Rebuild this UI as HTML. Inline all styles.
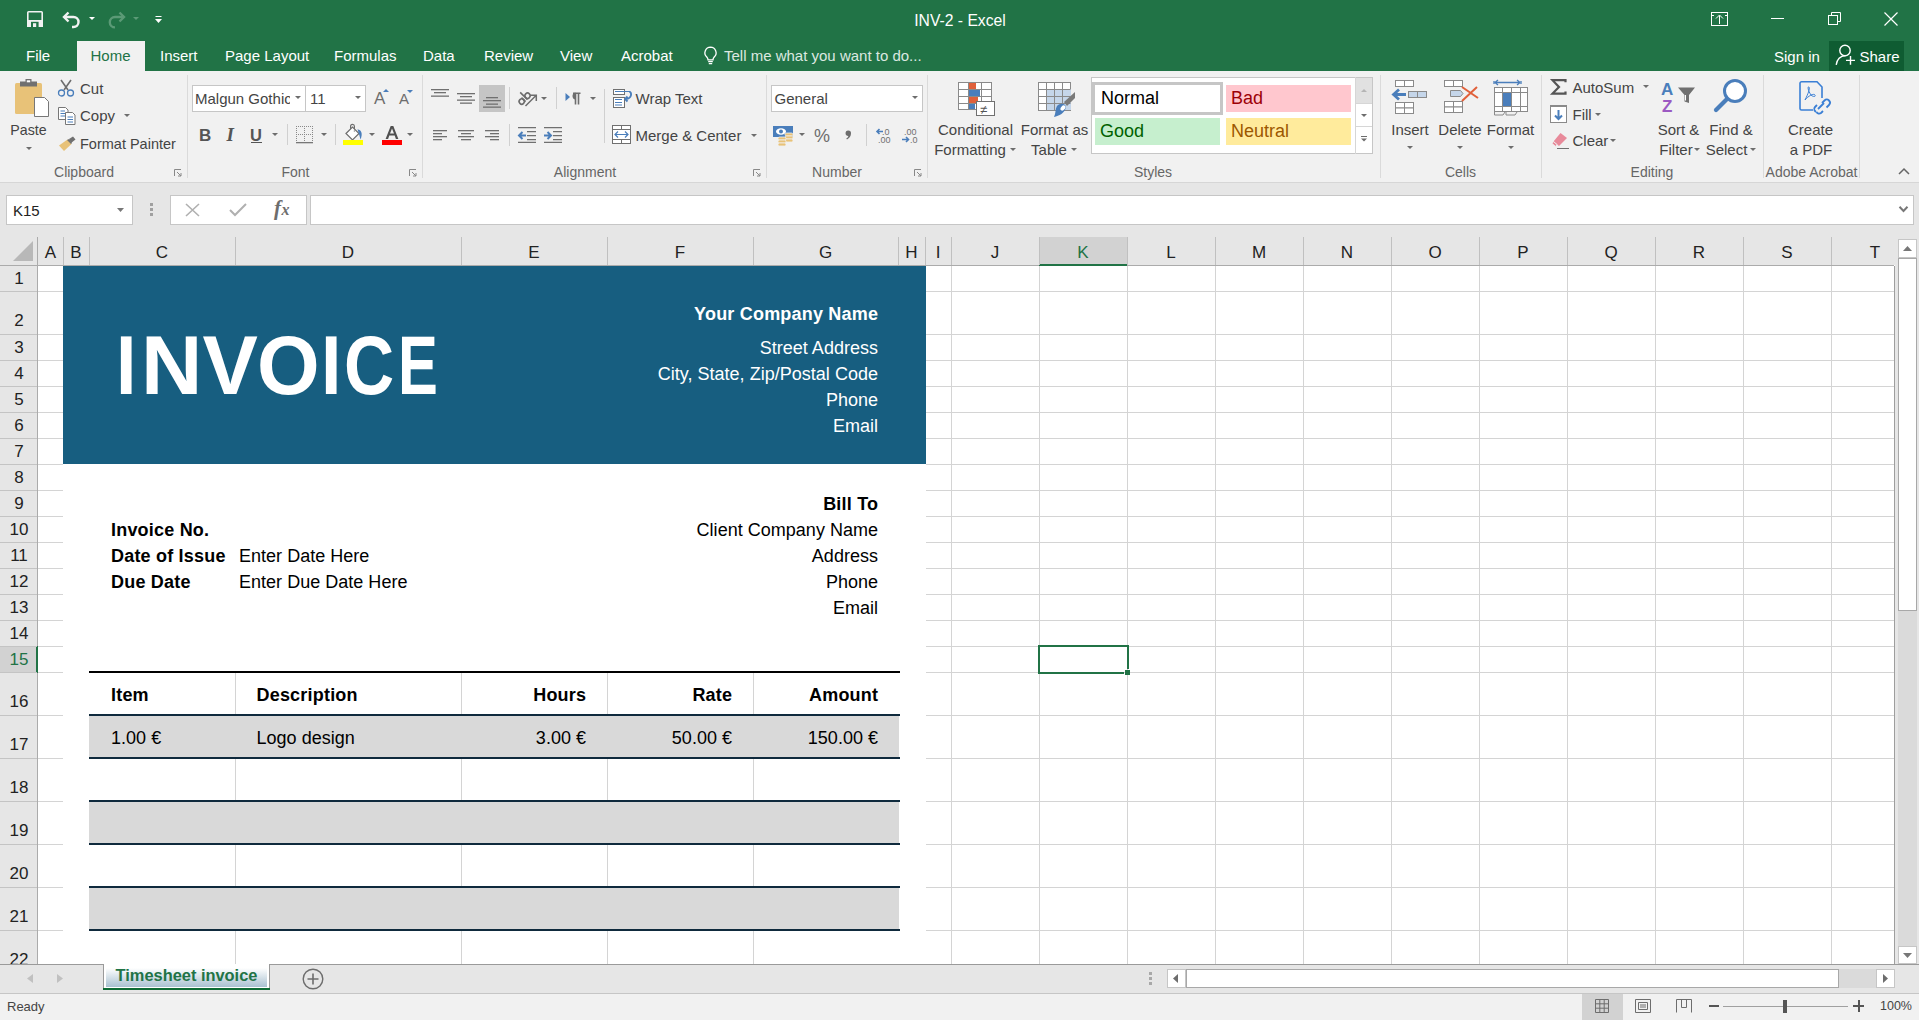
<!DOCTYPE html>
<html><head><meta charset="utf-8"><title>INV-2 - Excel</title>
<style>
html,body{margin:0;padding:0;width:1919px;height:1020px;overflow:hidden;background:#fff;}
body{position:relative;font-family:'Liberation Sans', sans-serif;}
.r{position:absolute;}
.t{position:absolute;white-space:pre;line-height:1;font-family:'Liberation Sans', sans-serif;}
svg.r{overflow:visible;}
</style></head><body>
<div class="r" style="left:0px;top:0px;width:1919px;height:71px;background:#217346;"></div>
<svg class="r" style="left:27px;top:11px;" width="16" height="16" viewBox="0 0 16 16"><rect x="0.8" y="0.8" width="14.4" height="14.4" rx="0.8" fill="none" stroke="#f2f2f2" stroke-width="1.6"/><rect x="0" y="9" width="16" height="7" fill="#f2f2f2"/><rect x="4" y="10.8" width="7.6" height="5.2" fill="#217346"/><rect x="6" y="12.2" width="3.2" height="3.8" fill="#f2f2f2"/></svg>
<svg class="r" style="left:62px;top:11px;" width="20" height="18" viewBox="0 0 20 18"><path d="M6.5 1.5L2 6L6.5 10.5" fill="none" stroke="#f2f2f2" stroke-width="2.4"/><path d="M2.5 6H11.5A5 5 0 0 1 11.5 16H10" fill="none" stroke="#f2f2f2" stroke-width="2.4"/></svg>
<svg class="r" style="left:89px;top:17px;" width="6" height="3" viewBox="0 0 6 3"><path d="M0 0H6L3.0 3Z" fill="#fff"/></svg>
<svg class="r" style="left:106px;top:11px;" width="20" height="18" viewBox="0 0 20 18"><path d="M13.5 1.5L18 6L13.5 10.5" fill="none" stroke="#5b9a76" stroke-width="2.4"/><path d="M17.5 6H9A5.2 5.2 0 0 0 9 16.4" fill="none" stroke="#5b9a76" stroke-width="2.4"/></svg>
<svg class="r" style="left:133px;top:17px;" width="6" height="3" viewBox="0 0 6 3"><path d="M0 0H6L3.0 3Z" fill="#5b9a76"/></svg>
<svg class="r" style="left:155px;top:16px;" width="7" height="8" viewBox="0 0 7 8"><path d="M0.5 0.5H6.5" stroke="#fff" stroke-width="1"/><path d="M0 3H7L3.5 7Z" fill="#fff"/></svg>
<div class="t" style="top:12.66px;font-size:15.7px;color:#fff;left:660px;width:600px;text-align:center;">INV-2 - Excel</div>
<svg class="r" style="left:1711px;top:12px;" width="17" height="14" viewBox="0 0 17 14"><rect x="0.5" y="0.5" width="16" height="13" fill="none" stroke="#fff"/><path d="M8.5 3.5V12" stroke="#fff"/><path d="M5 6.5L8.5 3L12 6.5" fill="none" stroke="#fff"/><path d="M0.5 3.5H3M14 3.5H16.5" stroke="#fff"/></svg>
<div class="r" style="left:1771px;top:18px;width:13px;height:1px;background:#fff;"></div>
<svg class="r" style="left:1828px;top:12px;" width="13" height="13" viewBox="0 0 13 13"><rect x="0.5" y="3.5" width="9" height="9" fill="none" stroke="#fff"/><path d="M3.5 3.5V0.5H12.5V9.5H9.5" fill="none" stroke="#fff"/></svg>
<svg class="r" style="left:1884px;top:12px;" width="14" height="14" viewBox="0 0 14 14"><path d="M0.5 0.5L13.5 13.5M13.5 0.5L0.5 13.5" stroke="#fff" stroke-width="1.2"/></svg>
<div class="r" style="left:77px;top:41px;width:68px;height:30px;background:#f1f1f1;"></div>
<div class="t" style="top:48.25px;font-size:15px;color:#fff;left:26px;">File</div>
<div class="t" style="top:48.25px;font-size:15px;color:#fff;left:160px;">Insert</div>
<div class="t" style="top:48.25px;font-size:15px;color:#fff;left:225px;">Page Layout</div>
<div class="t" style="top:48.25px;font-size:15px;color:#fff;left:334px;">Formulas</div>
<div class="t" style="top:48.25px;font-size:15px;color:#fff;left:423px;">Data</div>
<div class="t" style="top:48.25px;font-size:15px;color:#fff;left:484px;">Review</div>
<div class="t" style="top:48.25px;font-size:15px;color:#fff;left:560px;">View</div>
<div class="t" style="top:48.25px;font-size:15px;color:#fff;left:621px;">Acrobat</div>
<div class="t" style="top:48.25px;font-size:15px;color:#217346;left:90.5px;">Home</div>
<svg class="r" style="left:703px;top:46px;" width="15" height="19" viewBox="0 0 15 19"><path d="M7.5 1.2A5.6 5.6 0 0 0 3.6 10.8C4.6 11.8 5 12.6 5 13.8H10C10 12.6 10.4 11.8 11.4 10.8A5.6 5.6 0 0 0 7.5 1.2Z" fill="none" stroke="#fff" stroke-width="1.3"/><path d="M5.2 15.6H9.8M5.8 17.6H9.2" stroke="#fff" stroke-width="1.3"/></svg>
<div class="t" style="top:48.25px;font-size:15px;color:#dce8e0;left:724px;">Tell me what you want to do...</div>
<div class="t" style="top:49.25px;font-size:15px;color:#fff;left:1774px;">Sign in</div>
<div class="r" style="left:1829px;top:41px;width:75px;height:30px;background:#0f5c32;"></div>
<svg class="r" style="left:1835px;top:44px;" width="22" height="22" viewBox="0 0 22 22"><circle cx="10" cy="6.5" r="5.2" fill="none" stroke="#fff" stroke-width="1.4"/><path d="M1.2 20.8C2 15 5.5 12 10.5 11.6" fill="none" stroke="#fff" stroke-width="1.4"/><path d="M11 16.4H20M15.5 12V20.8" stroke="#fff" stroke-width="1.4"/></svg>
<div class="t" style="top:49.25px;font-size:15px;color:#fff;left:1859.5px;">Share</div>
<div class="r" style="left:0px;top:71px;width:1919px;height:111px;background:#f1f1f1;"></div>
<div class="r" style="left:0px;top:182px;width:1919px;height:1px;background:#d6d6d6;"></div>
<div class="r" style="left:187px;top:75px;width:1px;height:103px;background:#dadada;"></div>
<div class="r" style="left:422px;top:75px;width:1px;height:103px;background:#dadada;"></div>
<div class="r" style="left:766px;top:75px;width:1px;height:103px;background:#dadada;"></div>
<div class="r" style="left:927px;top:75px;width:1px;height:103px;background:#dadada;"></div>
<div class="r" style="left:1380px;top:75px;width:1px;height:103px;background:#dadada;"></div>
<div class="r" style="left:1541px;top:75px;width:1px;height:103px;background:#dadada;"></div>
<div class="r" style="left:1763px;top:75px;width:1px;height:103px;background:#dadada;"></div>
<div class="r" style="left:1859px;top:75px;width:1px;height:103px;background:#dadada;"></div>
<div class="t" style="top:165.10px;font-size:14px;color:#666;left:-216px;width:600px;text-align:center;">Clipboard</div>
<div class="t" style="top:165.10px;font-size:14px;color:#666;left:-4.5px;width:600px;text-align:center;">Font</div>
<div class="t" style="top:165.10px;font-size:14px;color:#666;left:285px;width:600px;text-align:center;">Alignment</div>
<div class="t" style="top:165.10px;font-size:14px;color:#666;left:537px;width:600px;text-align:center;">Number</div>
<div class="t" style="top:165.10px;font-size:14px;color:#666;left:853px;width:600px;text-align:center;">Styles</div>
<div class="t" style="top:165.10px;font-size:14px;color:#666;left:1160.5px;width:600px;text-align:center;">Cells</div>
<div class="t" style="top:165.10px;font-size:14px;color:#666;left:1352px;width:600px;text-align:center;">Editing</div>
<div class="t" style="top:165.10px;font-size:14px;color:#666;left:1511.5px;width:600px;text-align:center;">Adobe Acrobat</div>
<svg class="r" style="left:174px;top:169px;" width="8" height="8" viewBox="0 0 8 8"><path d="M0.5 7V0.5H7" fill="none" stroke="#888"/><path d="M3 3L7 7M7 4V7H4" fill="none" stroke="#888"/></svg>
<svg class="r" style="left:409px;top:169px;" width="8" height="8" viewBox="0 0 8 8"><path d="M0.5 7V0.5H7" fill="none" stroke="#888"/><path d="M3 3L7 7M7 4V7H4" fill="none" stroke="#888"/></svg>
<svg class="r" style="left:753px;top:169px;" width="8" height="8" viewBox="0 0 8 8"><path d="M0.5 7V0.5H7" fill="none" stroke="#888"/><path d="M3 3L7 7M7 4V7H4" fill="none" stroke="#888"/></svg>
<svg class="r" style="left:914px;top:169px;" width="8" height="8" viewBox="0 0 8 8"><path d="M0.5 7V0.5H7" fill="none" stroke="#888"/><path d="M3 3L7 7M7 4V7H4" fill="none" stroke="#888"/></svg>
<svg class="r" style="left:1898px;top:167px;" width="12" height="8" viewBox="0 0 12 8"><path d="M1 7L6 2L11 7" fill="none" stroke="#666" stroke-width="1.5"/></svg>
<svg class="r" style="left:14px;top:79px;" width="36" height="40" viewBox="0 0 36 40"><rect x="1" y="4" width="27" height="31" rx="1.5" fill="#e8c278"/><rect x="6" y="2.5" width="17" height="5" fill="#707070"/><rect x="11.5" y="0" width="6" height="4.5" fill="#707070"/><rect x="12.8" y="1.3" width="3.4" height="2" fill="#fff"/><path d="M20.5 18.5H30.5L34.5 22.5V37.5H20.5Z" fill="#fff" stroke="#777"/></svg>
<div class="t" style="top:122.93px;font-size:14.2px;color:#444444;left:-271.5px;width:600px;text-align:center;">Paste</div>
<svg class="r" style="left:25.5px;top:147px;" width="6" height="3" viewBox="0 0 6 3"><path d="M0 0H6L3.0 3Z" fill="#6d6d6d"/></svg>
<svg class="r" style="left:57px;top:79px;" width="18" height="18" viewBox="0 0 18 18"><path d="M4 1L11 11M14 1L7 11" stroke="#6d6d6d" stroke-width="1.6"/><circle cx="4.5" cy="14" r="3" fill="none" stroke="#4a7ebb" stroke-width="1.3"/><circle cx="13.5" cy="14" r="3" fill="none" stroke="#4a7ebb" stroke-width="1.3"/></svg>
<div class="t" style="top:81.25px;font-size:15px;color:#444444;left:80px;">Cut</div>
<svg class="r" style="left:57px;top:107px;" width="19" height="18" viewBox="0 0 19 18"><path d="M1.5 0.5H8.5L11 3V12.5H1.5Z" fill="#fff" stroke="#777"/><path d="M3.5 4H8M3.5 6.5H8M3.5 9H8" stroke="#4a7ebb"/><path d="M8.5 5.5H15.5L18 8V17.5H8.5Z" fill="#fff" stroke="#777"/><path d="M10.5 10H16M10.5 12.5H16M10.5 15H16" stroke="#4a7ebb"/></svg>
<div class="t" style="top:108.25px;font-size:15px;color:#444444;left:80px;">Copy</div>
<svg class="r" style="left:124px;top:114px;" width="6" height="3" viewBox="0 0 6 3"><path d="M0 0H6L3.0 3Z" fill="#6d6d6d"/></svg>
<svg class="r" style="left:58px;top:136px;" width="18" height="16" viewBox="0 0 18 16"><path d="M11 3L15 0.5L17.5 3.5L13 7Z" fill="#707070"/><path d="M1 9.5L9.5 3.5L13.5 8L6 15Z" fill="#e8c278"/><path d="M9 4L11 3L14 7L13 8Z" fill="#707070"/></svg>
<div class="t" style="top:137.18px;font-size:14.5px;color:#444444;left:80px;">Format Painter</div>
<div class="r" style="left:192px;top:85px;width:114px;height:27px;background:#fff;border:1px solid #c6c6c6;box-sizing:border-box;"></div>
<div class="r" style="left:305px;top:85px;width:61px;height:27px;background:#fff;border:1px solid #c6c6c6;box-sizing:border-box;"></div>
<div class="t" style="top:91.25px;font-size:15px;color:#444444;left:195px;width:95px;overflow:hidden;padding-bottom:5px;">Malgun Gothic</div>
<svg class="r" style="left:295px;top:96px;" width="6" height="3" viewBox="0 0 6 3"><path d="M0 0H6L3.0 3Z" fill="#6d6d6d"/></svg>
<div class="t" style="top:91.25px;font-size:15px;color:#444444;left:310px;">11</div>
<svg class="r" style="left:355px;top:96px;" width="6" height="3" viewBox="0 0 6 3"><path d="M0 0H6L3.0 3Z" fill="#6d6d6d"/></svg>
<div class="t" style="top:89.55px;font-size:17px;color:#6d6d6d;left:374px;">A</div>
<svg class="r" style="left:383px;top:89px;" width="6" height="3" viewBox="0 0 6 3"><path d="M0 3H6L3 0Z" fill="#4a7ebb"/></svg>
<div class="t" style="top:91.25px;font-size:15px;color:#6d6d6d;left:399px;">A</div>
<svg class="r" style="left:407px;top:90px;" width="6" height="3" viewBox="0 0 6 3"><path d="M0 0H6L3 3Z" fill="#4a7ebb"/></svg>
<div class="t" style="top:126.55px;font-size:17px;color:#555;font-weight:700;left:199px;">B</div>
<div class="t" style="top:124.85px;font-size:19px;color:#555;font-weight:700;left:226.5px;font-style:italic;font-family:&quot;Liberation Serif&quot;,serif;">I</div>
<div class="t" style="top:126.97px;font-size:16.5px;color:#555;font-weight:700;left:250px;">U</div>
<div class="r" style="left:251px;top:142px;width:11px;height:1.2px;background:#555;"></div>
<svg class="r" style="left:272px;top:133px;" width="6" height="3" viewBox="0 0 6 3"><path d="M0 0H6L3.0 3Z" fill="#6d6d6d"/></svg>
<div class="r" style="left:287px;top:124px;width:1px;height:21px;background:#d0d0d0;"></div>
<svg class="r" style="left:296px;top:126px;" width="19" height="19" viewBox="0 0 19 19"><g fill="#8a8a8a"><rect x="0" y="0" width="1" height="1"/><rect x="0" y="8" width="1" height="1"/><rect x="2" y="0" width="1" height="1"/><rect x="2" y="8" width="1" height="1"/><rect x="4" y="0" width="1" height="1"/><rect x="4" y="8" width="1" height="1"/><rect x="6" y="0" width="1" height="1"/><rect x="6" y="8" width="1" height="1"/><rect x="8" y="0" width="1" height="1"/><rect x="8" y="8" width="1" height="1"/><rect x="10" y="0" width="1" height="1"/><rect x="10" y="8" width="1" height="1"/><rect x="12" y="0" width="1" height="1"/><rect x="12" y="8" width="1" height="1"/><rect x="14" y="0" width="1" height="1"/><rect x="14" y="8" width="1" height="1"/><rect x="16" y="0" width="1" height="1"/><rect x="16" y="8" width="1" height="1"/><rect x="0" y="0" width="1" height="1"/><rect x="0" y="2" width="1" height="1"/><rect x="0" y="4" width="1" height="1"/><rect x="0" y="6" width="1" height="1"/><rect x="0" y="8" width="1" height="1"/><rect x="0" y="10" width="1" height="1"/><rect x="0" y="12" width="1" height="1"/><rect x="0" y="14" width="1" height="1"/><rect x="8" y="0" width="1" height="1"/><rect x="8" y="2" width="1" height="1"/><rect x="8" y="4" width="1" height="1"/><rect x="8" y="6" width="1" height="1"/><rect x="8" y="8" width="1" height="1"/><rect x="8" y="10" width="1" height="1"/><rect x="8" y="12" width="1" height="1"/><rect x="8" y="14" width="1" height="1"/><rect x="16" y="0" width="1" height="1"/><rect x="16" y="2" width="1" height="1"/><rect x="16" y="4" width="1" height="1"/><rect x="16" y="6" width="1" height="1"/><rect x="16" y="8" width="1" height="1"/><rect x="16" y="10" width="1" height="1"/><rect x="16" y="12" width="1" height="1"/><rect x="16" y="14" width="1" height="1"/></g><rect x="0" y="16" width="17" height="1.3" fill="#777"/></svg>
<svg class="r" style="left:321px;top:133px;" width="6" height="3" viewBox="0 0 6 3"><path d="M0 0H6L3.0 3Z" fill="#6d6d6d"/></svg>
<div class="r" style="left:335px;top:124px;width:1px;height:21px;background:#d0d0d0;"></div>
<svg class="r" style="left:342px;top:124px;" width="22" height="17" viewBox="0 0 22 17"><path d="M8.6 6V2.2A1.9 1.9 0 0 1 12.4 2.2V7.5" fill="none" stroke="#6d6d6d" stroke-width="1.2"/><path d="M4 9.5L10.5 3L17 9.5L10.5 16Z" fill="#fff" stroke="#6d6d6d" stroke-width="1.2"/><path d="M12.4 6.5V7.5" stroke="#6d6d6d" stroke-width="1.2"/><path d="M15.5 5.2C19.5 6 21 9.5 18.5 15.5L17 10Z" fill="#4a7ebb"/></svg>
<div class="r" style="left:343px;top:140px;width:20px;height:5px;background:#ffff00;"></div>
<svg class="r" style="left:369px;top:133px;" width="6" height="3" viewBox="0 0 6 3"><path d="M0 0H6L3.0 3Z" fill="#6d6d6d"/></svg>
<svg class="r" style="left:385px;top:125px;" width="14" height="15" viewBox="0 0 14 15"><path fill-rule="evenodd" d="M0.6 14L5.7 1H8.3L13.4 14H10.9L9.7 10.6H4.3L3.1 14ZM5 8.6H9L7 3.4Z" fill="#505050"/></svg>
<div class="r" style="left:382px;top:140px;width:20px;height:5px;background:#ff0000;"></div>
<svg class="r" style="left:407px;top:133px;" width="6" height="3" viewBox="0 0 6 3"><path d="M0 0H6L3.0 3Z" fill="#6d6d6d"/></svg>
<div class="r" style="left:479px;top:85px;width:26px;height:27px;background:#c5c5c5;"></div>
<svg class="r" style="left:431px;top:0px;" width="20" height="160" viewBox="0 0 20 160"><rect x="0" y="89" width="18" height="1.3" fill="#707070"/><rect x="3" y="92" width="12" height="1.3" fill="#707070"/><rect x="0" y="95.5" width="18" height="1.3" fill="#707070"/></svg>
<svg class="r" style="left:457px;top:0px;" width="20" height="160" viewBox="0 0 20 160"><rect x="0" y="93" width="18" height="1.3" fill="#707070"/><rect x="3" y="96" width="12" height="1.3" fill="#707070"/><rect x="0" y="99.5" width="18" height="1.3" fill="#707070"/><rect x="3" y="102.5" width="12" height="1.3" fill="#707070"/></svg>
<svg class="r" style="left:483px;top:0px;" width="20" height="160" viewBox="0 0 20 160"><rect x="3" y="97" width="12" height="1.3" fill="#707070"/><rect x="0" y="100" width="18" height="1.3" fill="#707070"/><rect x="3" y="103.5" width="12" height="1.3" fill="#707070"/><rect x="0" y="106.5" width="18" height="1.3" fill="#707070"/></svg>
<div class="r" style="left:509px;top:87px;width:1px;height:22px;background:#d0d0d0;"></div>
<svg class="r" style="left:516px;top:88px;" width="22" height="20" viewBox="0 0 22 20"><g transform="rotate(-45 8 9)" fill="none" stroke="#6d6d6d" stroke-width="1.6"><circle cx="3.2" cy="10.6" r="2.6"/><path d="M5.8 7.6V13.4"/><path d="M8.6 3V13.4"/><circle cx="11.4" cy="10.6" r="2.6"/></g><path d="M9.5 18L20 7.5M14.5 7.2H20.3V13" fill="none" stroke="#6d6d6d" stroke-width="1.5"/></svg>
<svg class="r" style="left:541px;top:97px;" width="6" height="3" viewBox="0 0 6 3"><path d="M0 0H6L3.0 3Z" fill="#6d6d6d"/></svg>
<div class="r" style="left:556px;top:87px;width:1px;height:22px;background:#d0d0d0;"></div>
<svg class="r" style="left:565px;top:92px;" width="17" height="13" viewBox="0 0 17 13"><path d="M0.5 1L5 5L0.5 9Z" fill="#4a7ebb"/><path d="M10.5 1.5V12.5M13.5 1.5V12.5M8 1.3H15.5" stroke="#6d6d6d" stroke-width="1.6"/><path d="M10.5 0.5A3.6 3.6 0 0 0 10.5 7.6Z" fill="#6d6d6d"/></svg>
<svg class="r" style="left:590px;top:97px;" width="6" height="3" viewBox="0 0 6 3"><path d="M0 0H6L3.0 3Z" fill="#6d6d6d"/></svg>
<div class="r" style="left:604px;top:89px;width:1px;height:54px;background:#d0d0d0;"></div>
<svg class="r" style="left:433px;top:0px;" width="20" height="160" viewBox="0 0 20 160"><rect x="0" y="130" width="14" height="1.3" fill="#707070"/><rect x="0" y="133" width="9" height="1.3" fill="#707070"/><rect x="0" y="136" width="14" height="1.3" fill="#707070"/><rect x="0" y="139" width="9" height="1.3" fill="#707070"/></svg>
<svg class="r" style="left:458px;top:0px;" width="20" height="160" viewBox="0 0 20 160"><rect x="0" y="130" width="16" height="1.3" fill="#707070"/><rect x="3" y="133" width="10" height="1.3" fill="#707070"/><rect x="0" y="136" width="16" height="1.3" fill="#707070"/><rect x="3" y="139" width="10" height="1.3" fill="#707070"/></svg>
<svg class="r" style="left:485px;top:0px;" width="20" height="160" viewBox="0 0 20 160"><rect x="0" y="130" width="14" height="1.3" fill="#707070"/><rect x="5" y="133" width="9" height="1.3" fill="#707070"/><rect x="0" y="136" width="14" height="1.3" fill="#707070"/><rect x="5" y="139" width="9" height="1.3" fill="#707070"/></svg>
<div class="r" style="left:509px;top:124px;width:1px;height:22px;background:#d0d0d0;"></div>
<svg class="r" style="left:518px;top:127px;" width="19" height="16" viewBox="0 0 19 16"><path d="M0 0.7H18M9 4.7H18M9 8.7H18M9 12.7H18M0 15.3H18" stroke="#707070" stroke-width="1.3"/><path d="M1 8.5H8M4.5 5L1 8.5L4.5 12" fill="none" stroke="#4a7ebb" stroke-width="2"/></svg>
<svg class="r" style="left:544px;top:127px;" width="19" height="16" viewBox="0 0 19 16"><path d="M0 0.7H18M9 4.7H18M9 8.7H18M9 12.7H18M0 15.3H18" stroke="#707070" stroke-width="1.3"/><path d="M0 8.5H7M3.5 5L7 8.5L3.5 12" fill="none" stroke="#4a7ebb" stroke-width="2"/></svg>
<svg class="r" style="left:612px;top:88px;" width="21" height="20" viewBox="0 0 21 20"><rect x="1.5" y="1.5" width="11" height="5" fill="#fff" stroke="#707070"/><rect x="1.5" y="9.5" width="11" height="10" fill="#fff" stroke="#707070"/><path d="M3 3.5H18M3 11.5H10M3 14.5H10M3 17H10" stroke="#4a7ebb" stroke-width="1.2"/><path d="M17.5 3.5C20 5 20 10 14 11M15.5 8.5L13 11L15.5 13.5" fill="none" stroke="#4a7ebb" stroke-width="1.8"/></svg>
<div class="t" style="top:91.25px;font-size:15px;color:#444444;left:635.5px;">Wrap Text</div>
<svg class="r" style="left:612px;top:125px;" width="19" height="19" viewBox="0 0 19 19"><rect x="0.5" y="0.5" width="18" height="18" fill="#fff" stroke="#707070"/><path d="M0.5 4.5H18.5M0.5 14.5H18.5M9.5 0.5V4.5M9.5 14.5V18.5" stroke="#707070"/><path d="M3 9.5H16M6 6.5L3 9.5L6 12.5M13 6.5L16 9.5L13 12.5" fill="none" stroke="#4a7ebb" stroke-width="1.2"/></svg>
<div class="t" style="top:128.25px;font-size:15px;color:#444444;left:635.5px;">Merge &amp; Center</div>
<svg class="r" style="left:751px;top:134px;" width="6" height="3" viewBox="0 0 6 3"><path d="M0 0H6L3.0 3Z" fill="#6d6d6d"/></svg>
<div class="r" style="left:771px;top:85px;width:152px;height:27px;background:#fff;border:1px solid #c6c6c6;box-sizing:border-box;"></div>
<div class="t" style="top:91.25px;font-size:15px;color:#444444;left:774.5px;">General</div>
<svg class="r" style="left:912px;top:96px;" width="6" height="3" viewBox="0 0 6 3"><path d="M0 0H6L3.0 3Z" fill="#6d6d6d"/></svg>
<svg class="r" style="left:773px;top:126px;" width="21" height="20" viewBox="0 0 21 20"><rect x="0" y="0" width="20" height="11" fill="#4a7ebb"/><ellipse cx="8" cy="5.5" rx="5" ry="3.2" fill="#fff"/><circle cx="8" cy="5.5" r="2" fill="#4a7ebb"/><g fill="#e8c278" stroke="#f1f1f1" stroke-width="0.8"><rect x="12" y="7" width="8" height="3" rx="1.5"/><rect x="12" y="10" width="8" height="3" rx="1.5"/><rect x="12" y="13" width="8" height="3" rx="1.5"/><rect x="5" y="11" width="8" height="3" rx="1.5"/><rect x="5" y="14" width="8" height="3" rx="1.5"/><rect x="5" y="17" width="8" height="3" rx="1.5"/></g></svg>
<svg class="r" style="left:799px;top:133px;" width="6" height="3" viewBox="0 0 6 3"><path d="M0 0H6L3.0 3Z" fill="#6d6d6d"/></svg>
<div class="t" style="top:126.70px;font-size:18px;color:#6d6d6d;left:814px;">%</div>
<svg class="r" style="left:845px;top:130px;" width="8" height="10" viewBox="0 0 8 10"><path d="M3.2 0.5A2.8 2.8 0 0 1 6 3.5C6 6 4.5 8 2 9.5L1.2 8.6C2.6 7.6 3.3 6.8 3.4 6A2.6 2.6 0 0 1 3.2 0.5Z" fill="#6d6d6d"/></svg>
<div class="r" style="left:866px;top:124px;width:1px;height:22px;background:#d0d0d0;"></div>
<svg class="r" style="left:876px;top:127px;" width="16" height="17" viewBox="0 0 16 17"><text x="6" y="7.5" font-family="Liberation Sans" font-size="9" fill="#707070">.0</text><text x="2" y="16" font-family="Liberation Sans" font-size="9" fill="#707070">.00</text><path d="M1 4.5H7M3.5 2L1 4.5L3.5 7" fill="none" stroke="#4a7ebb" stroke-width="1.6"/></svg>
<svg class="r" style="left:902px;top:127px;" width="16" height="17" viewBox="0 0 16 17"><text x="2" y="7.5" font-family="Liberation Sans" font-size="9" fill="#707070">.00</text><text x="8" y="16" font-family="Liberation Sans" font-size="9" fill="#707070">.0</text><path d="M0 12.5H6.5M4 10L6.5 12.5L4 15" fill="none" stroke="#4a7ebb" stroke-width="1.6"/></svg>
<svg class="r" style="left:958px;top:82px;" width="38" height="36" viewBox="0 0 38 36"><g fill="#fff" stroke="#8a8a8a"><rect x="0.5" y="0.5" width="33" height="27"/></g><path d="M0.5 7.5H33.5M0.5 14.5H33.5M0.5 21.5H33.5M10.5 0.5V27.5M23.5 0.5V27.5" stroke="#8a8a8a"/><rect x="11" y="1" width="7" height="6" fill="#e0603a"/><rect x="11" y="8" width="11" height="6" fill="#4a7ebb"/><rect x="11" y="15" width="9" height="6" fill="#e0603a"/><rect x="11" y="22" width="6" height="5" fill="#4a7ebb"/><rect x="18.5" y="19.5" width="18" height="14" fill="#fff" stroke="#707070"/><text x="22" y="32" font-family="Liberation Sans" font-size="13" fill="#555">&#8800;</text></svg>
<div class="t" style="top:122.25px;font-size:15px;color:#444444;left:675.5px;width:600px;text-align:center;">Conditional</div>
<div class="t" style="top:142.25px;font-size:15px;color:#444444;left:670px;width:600px;text-align:center;">Formatting</div>
<svg class="r" style="left:1010px;top:148px;" width="6" height="3" viewBox="0 0 6 3"><path d="M0 0H6L3.0 3Z" fill="#6d6d6d"/></svg>
<svg class="r" style="left:1038px;top:82px;" width="38" height="36" viewBox="0 0 38 36"><rect x="0.5" y="0.5" width="32" height="28" fill="#fff" stroke="#8a8a8a"/><rect x="9" y="7" width="24" height="21" fill="#c5d6ea"/><path d="M0.5 7.5H32.5M0.5 14.5H32.5M0.5 21.5H32.5M8.5 0.5V28.5M16.5 0.5V28.5M24.5 0.5V28.5" stroke="#8a8a8a"/><path d="M26 20L37 10V16L29 24Z" fill="#7a7a7a"/><path d="M19 24C22 21 27 21 28 25C27 31 21 34 16 35C18 31 17 27 19 24Z" fill="#4a7ebb"/><ellipse cx="25" cy="26" rx="2" ry="3" fill="#fff" transform="rotate(40 25 26)"/></svg>
<div class="t" style="top:122.25px;font-size:15px;color:#444444;left:754.5px;width:600px;text-align:center;">Format as</div>
<div class="t" style="top:142.25px;font-size:15px;color:#444444;left:749px;width:600px;text-align:center;">Table</div>
<svg class="r" style="left:1071px;top:148px;" width="6" height="3" viewBox="0 0 6 3"><path d="M0 0H6L3.0 3Z" fill="#6d6d6d"/></svg>
<div class="r" style="left:1091px;top:77px;width:282px;height:77px;background:#fff;border:1px solid #c6c6c6;box-sizing:border-box;"></div>
<div class="r" style="left:1092px;top:82px;width:131px;height:33px;background:#fff;border:1px solid #c6c6c6;box-sizing:border-box;border-width:3px;"></div>
<div class="t" style="top:88.70px;font-size:18px;color:#000;left:1101px;">Normal</div>
<div class="r" style="left:1226px;top:85px;width:125px;height:27px;background:#ffc7ce;"></div>
<div class="t" style="top:88.70px;font-size:18px;color:#9c0006;left:1231px;">Bad</div>
<div class="r" style="left:1095px;top:118px;width:125px;height:27px;background:#c6efce;"></div>
<div class="t" style="top:121.70px;font-size:18px;color:#006100;left:1100px;">Good</div>
<div class="r" style="left:1226px;top:118px;width:125px;height:27px;background:#ffeb9c;"></div>
<div class="t" style="top:121.70px;font-size:18px;color:#9c5700;left:1231px;">Neutral</div>
<div class="r" style="left:1355px;top:77px;width:1px;height:77px;background:#d6d6d6;"></div>
<div class="r" style="left:1356px;top:78px;width:16px;height:25px;background:#e1e1e1;"></div>
<div class="r" style="left:1356px;top:103px;width:16px;height:1px;background:#d6d6d6;"></div>
<div class="r" style="left:1356px;top:126px;width:16px;height:1px;background:#d6d6d6;"></div>
<svg class="r" style="left:1361px;top:89px;" width="6" height="3" viewBox="0 0 6 3"><path d="M0 3H6L3 0Z" fill="#b5b5b5"/></svg>
<svg class="r" style="left:1361px;top:114px;" width="6" height="3" viewBox="0 0 6 3"><path d="M0 0H6L3.0 3Z" fill="#6d6d6d"/></svg>
<svg class="r" style="left:1361px;top:136px;" width="6" height="6" viewBox="0 0 6 6"><path d="M0 0.5H6" stroke="#6d6d6d"/><path d="M0 2.5H6L3 5.5Z" fill="#6d6d6d"/></svg>
<svg class="r" style="left:1391px;top:80px;" width="37" height="35" viewBox="0 0 37 35"><g fill="#fff" stroke="#8a8a8a"><rect x="4.5" y="0.5" width="9" height="6"/><rect x="13.5" y="0.5" width="9" height="6"/><rect x="4.5" y="22.5" width="9" height="5.5"/><rect x="13.5" y="22.5" width="9" height="5.5"/><rect x="4.5" y="28" width="9" height="5.5"/><rect x="13.5" y="28" width="9" height="5.5"/></g><g fill="#c5d6ea" stroke="#8a8a8a"><rect x="17.5" y="11.5" width="9" height="6"/><rect x="26.5" y="11.5" width="9" height="6"/></g><path d="M15 14.5H3M8 9.5L2.5 14.5L8 19.5" fill="none" stroke="#4a7ebb" stroke-width="2.8"/></svg>
<div class="t" style="top:122.25px;font-size:15px;color:#444444;left:1110px;width:600px;text-align:center;">Insert</div>
<svg class="r" style="left:1407px;top:146px;" width="6" height="3" viewBox="0 0 6 3"><path d="M0 0H6L3.0 3Z" fill="#6d6d6d"/></svg>
<svg class="r" style="left:1443px;top:80px;" width="36" height="33" viewBox="0 0 36 33"><g fill="#fff" stroke="#8a8a8a"><rect x="1.5" y="0.5" width="9" height="6"/><rect x="10.5" y="0.5" width="9" height="6"/><rect x="1.5" y="21.5" width="9" height="5.5"/><rect x="10.5" y="21.5" width="9" height="5.5"/><rect x="1.5" y="27" width="9" height="5.5"/><rect x="10.5" y="27" width="9" height="5.5"/></g><path d="M7.5 10.5H17.5L20 13.5L17.5 16.5H7.5Z" fill="#c5d6ea" stroke="#8a8a8a"/><path d="M19 7L35 18M34 7L19 21" stroke="#e0603a" stroke-width="2"/></svg>
<div class="t" style="top:122.25px;font-size:15px;color:#444444;left:1160px;width:600px;text-align:center;">Delete</div>
<svg class="r" style="left:1457px;top:146px;" width="6" height="3" viewBox="0 0 6 3"><path d="M0 0H6L3.0 3Z" fill="#6d6d6d"/></svg>
<svg class="r" style="left:1493px;top:78px;" width="35" height="38" viewBox="0 0 35 38"><path d="M1 3V6M28 3V6M2 4.5H27M2 4.5L5 2M2 4.5L5 7M27 4.5L24 2M27 4.5L24 7" fill="none" stroke="#4a7ebb" stroke-width="1.3"/><rect x="1.5" y="9.5" width="33" height="24" fill="#fff" stroke="#8a8a8a"/><path d="M1.5 14.5H34.5M1.5 28.5H34.5M9.5 9.5V33.5M18.5 9.5V33.5M27.5 9.5V33.5" stroke="#8a8a8a"/><rect x="10" y="15" width="8" height="13" fill="#4a7ebb"/><path d="M1.5 33.5V37H10L12 34M13 34V37H22L24 34" fill="none" stroke="#8a8a8a"/></svg>
<div class="t" style="top:122.25px;font-size:15px;color:#444444;left:1210.5px;width:600px;text-align:center;">Format</div>
<svg class="r" style="left:1508px;top:146px;" width="6" height="3" viewBox="0 0 6 3"><path d="M0 0H6L3.0 3Z" fill="#6d6d6d"/></svg>
<svg class="r" style="left:1551px;top:79px;" width="16" height="16" viewBox="0 0 16 16"><path d="M14.5 3.2V1.2H1.5L8 8L1.5 14.6H14.5V12.6" fill="none" stroke="#555" stroke-width="2.2" stroke-linejoin="miter"/></svg>
<div class="t" style="top:80.25px;font-size:15px;color:#444444;left:1572.5px;">AutoSum</div>
<svg class="r" style="left:1643px;top:85px;" width="6" height="3" viewBox="0 0 6 3"><path d="M0 0H6L3.0 3Z" fill="#6d6d6d"/></svg>
<svg class="r" style="left:1550px;top:105px;" width="18" height="18" viewBox="0 0 18 18"><rect x="0.5" y="0.5" width="16" height="17" fill="#fff" stroke="#8a8a8a"/><rect x="0" y="0" width="17" height="2" fill="#8a8a8a"/><path d="M8.5 5V14M5 10.5L8.5 14L12 10.5" fill="none" stroke="#4a7ebb" stroke-width="2"/></svg>
<div class="t" style="top:107.25px;font-size:15px;color:#444444;left:1572.5px;">Fill</div>
<svg class="r" style="left:1595px;top:113px;" width="6" height="3" viewBox="0 0 6 3"><path d="M0 0H6L3.0 3Z" fill="#6d6d6d"/></svg>
<svg class="r" style="left:1551px;top:132px;" width="18" height="17" viewBox="0 0 18 17"><path d="M9.5 1L16 6L8 14L2.5 9.5Z" fill="#e88a9a"/><path d="M2.5 9.5L6 12.5L4.5 14.5L1 11.5Z" fill="#e88a9a" stroke="#f1f1f1" stroke-width="1"/><path d="M6 16.5H18" stroke="#707070"/></svg>
<div class="t" style="top:133.25px;font-size:15px;color:#444444;left:1572.5px;">Clear</div>
<svg class="r" style="left:1610px;top:139px;" width="6" height="3" viewBox="0 0 6 3"><path d="M0 0H6L3.0 3Z" fill="#6d6d6d"/></svg>
<svg class="r" style="left:1661px;top:80px;" width="36" height="33" viewBox="0 0 36 33"><text x="0" y="15" font-family="Liberation Sans" font-weight="700" font-size="17" fill="#4a7ebb">A</text><text x="1" y="32" font-family="Liberation Sans" font-weight="700" font-size="17" fill="#9b59c2">Z</text><path d="M17 7.5H34L28 15V23L23.5 21.5V15Z" fill="#707070"/><path d="M24.5 15V20.5" stroke="#fff" stroke-width="1"/></svg>
<div class="t" style="top:122.25px;font-size:15px;color:#444444;left:1378.5px;width:600px;text-align:center;">Sort &amp;</div>
<div class="t" style="top:142.25px;font-size:15px;color:#444444;left:1376px;width:600px;text-align:center;">Filter</div>
<svg class="r" style="left:1694px;top:148px;" width="6" height="3" viewBox="0 0 6 3"><path d="M0 0H6L3.0 3Z" fill="#6d6d6d"/></svg>
<svg class="r" style="left:1713px;top:79px;" width="36" height="36" viewBox="0 0 36 36"><circle cx="22" cy="12" r="10.5" fill="#fff" stroke="#4a7ebb" stroke-width="3"/><path d="M14 20L3 31" stroke="#4a7ebb" stroke-width="4.2" stroke-linecap="round"/></svg>
<div class="t" style="top:122.25px;font-size:15px;color:#444444;left:1431px;width:600px;text-align:center;">Find &amp;</div>
<div class="t" style="top:142.25px;font-size:15px;color:#444444;left:1426.5px;width:600px;text-align:center;">Select</div>
<svg class="r" style="left:1750px;top:148px;" width="6" height="3" viewBox="0 0 6 3"><path d="M0 0H6L3.0 3Z" fill="#6d6d6d"/></svg>
<svg class="r" style="left:1799px;top:81px;" width="33" height="37" viewBox="0 0 33 37"><path d="M14 29H2.5A1.5 1.5 0 0 1 1 27.5V2.3A1.5 1.5 0 0 1 2.5 0.8H18L23 6V17" fill="none" stroke="#3a7fd5" stroke-width="1.6"/><path d="M6 19C9 13 11 8 10 6C9 5 8 8 12 14C14 16 17 16 16 14C15 12 9 15 6 19Z" fill="none" stroke="#3a7fd5" stroke-width="1"/><path d="M19 28L25 22M17.5 31A3 3 0 0 0 22 32L24 30M23 22L25.5 19.5A3 3 0 0 1 30 24L27.5 26.5" fill="none" stroke="#3a7fd5" stroke-width="1.8"/><path d="M17 31L15.5 29.5A3 3 0 0 1 16 26L18 24" fill="none" stroke="#3a7fd5" stroke-width="1.8"/></svg>
<div class="t" style="top:122.25px;font-size:15px;color:#444444;left:1510.5px;width:600px;text-align:center;">Create</div>
<div class="t" style="top:142.25px;font-size:15px;color:#444444;left:1511px;width:600px;text-align:center;">a PDF</div>
<div class="r" style="left:0px;top:183px;width:1919px;height:54px;background:#e6e6e6;"></div>
<div class="r" style="left:6px;top:195px;width:127px;height:30px;background:#fff;border:1px solid #c6c6c6;box-sizing:border-box;"></div>
<div class="t" style="top:203.25px;font-size:15px;color:#222;left:13px;">K15</div>
<svg class="r" style="left:117px;top:208px;" width="7" height="4" viewBox="0 0 7 4"><path d="M0 0H7L3.5 4Z" fill="#777"/></svg>
<div class="r" style="left:150px;top:203px;width:3px;height:3px;background:#a0a0a0;"></div>
<div class="r" style="left:150px;top:208px;width:3px;height:3px;background:#a0a0a0;"></div>
<div class="r" style="left:150px;top:213px;width:3px;height:3px;background:#a0a0a0;"></div>
<div class="r" style="left:170px;top:195px;width:137px;height:30px;background:#fff;border:1px solid #c6c6c6;box-sizing:border-box;"></div>
<svg class="r" style="left:185px;top:203px;" width="15" height="14" viewBox="0 0 15 14"><path d="M1 1L14 13M14 1L1 13" stroke="#b0b0b0" stroke-width="1.6"/></svg>
<svg class="r" style="left:229px;top:203px;" width="18" height="14" viewBox="0 0 18 14"><path d="M1 7L6 12L17 1" fill="none" stroke="#b0b0b0" stroke-width="2"/></svg>
<div class="t" style="top:197.65px;font-size:21px;color:#6d6d6d;font-weight:700;left:274px;font-style:italic;font-family:&quot;Liberation Serif&quot;,serif;">f</div>
<div class="t" style="top:202.40px;font-size:16px;color:#6d6d6d;font-weight:700;left:281.5px;font-style:italic;font-family:&quot;Liberation Serif&quot;,serif;">x</div>
<div class="r" style="left:310px;top:195px;width:1604px;height:30px;background:#fff;border:1px solid #c6c6c6;box-sizing:border-box;"></div>
<svg class="r" style="left:1899px;top:206px;" width="9" height="7" viewBox="0 0 9 7"><path d="M0.5 0.8L4.5 5L8.5 0.8" fill="none" stroke="#777" stroke-width="2"/></svg>
<div class="r" style="left:0px;top:237px;width:1919px;height:28px;background:#e6e6e6;"></div>
<div class="r" style="left:0px;top:265px;width:1894px;height:1px;background:#ababab;"></div>
<div class="r" style="left:0px;top:266px;width:37px;height:698px;background:#e6e6e6;"></div>
<div class="r" style="left:37px;top:237px;width:1px;height:727px;background:#ababab;"></div>
<div class="r" style="left:38px;top:266px;width:1856px;height:698px;background:#fff;"></div>
<svg class="r" style="left:13px;top:241px;" width="21" height="21" viewBox="0 0 21 21"><path d="M20 0V20H0Z" fill="#b8b8b8"/></svg>
<div class="r" style="left:1039px;top:237px;width:88px;height:28px;background:#d2d2d2;"></div>
<div class="r" style="left:1039px;top:264px;width:88px;height:2px;background:#217346;"></div>
<div class="r" style="left:0px;top:647px;width:37px;height:25px;background:#d2d2d2;"></div>
<div class="r" style="left:36px;top:646px;width:2px;height:27px;background:#217346;"></div>
<div class="t" style="top:243.55px;font-size:17px;color:#222;left:-249.5px;width:600px;text-align:center;">A</div>
<div class="r" style="left:63px;top:237px;width:1px;height:28px;background:#c0c0c0;"></div>
<div class="t" style="top:243.55px;font-size:17px;color:#222;left:-224.0px;width:600px;text-align:center;">B</div>
<div class="r" style="left:89px;top:237px;width:1px;height:28px;background:#c0c0c0;"></div>
<div class="t" style="top:243.55px;font-size:17px;color:#222;left:-138.0px;width:600px;text-align:center;">C</div>
<div class="r" style="left:235px;top:237px;width:1px;height:28px;background:#c0c0c0;"></div>
<div class="t" style="top:243.55px;font-size:17px;color:#222;left:48.0px;width:600px;text-align:center;">D</div>
<div class="r" style="left:461px;top:237px;width:1px;height:28px;background:#c0c0c0;"></div>
<div class="t" style="top:243.55px;font-size:17px;color:#222;left:234.0px;width:600px;text-align:center;">E</div>
<div class="r" style="left:607px;top:237px;width:1px;height:28px;background:#c0c0c0;"></div>
<div class="t" style="top:243.55px;font-size:17px;color:#222;left:380.0px;width:600px;text-align:center;">F</div>
<div class="r" style="left:753px;top:237px;width:1px;height:28px;background:#c0c0c0;"></div>
<div class="t" style="top:243.55px;font-size:17px;color:#222;left:525.5px;width:600px;text-align:center;">G</div>
<div class="r" style="left:898px;top:237px;width:1px;height:28px;background:#c0c0c0;"></div>
<div class="t" style="top:243.55px;font-size:17px;color:#222;left:611.5px;width:600px;text-align:center;">H</div>
<div class="r" style="left:925px;top:237px;width:1px;height:28px;background:#c0c0c0;"></div>
<div class="t" style="top:243.55px;font-size:17px;color:#222;left:638.0px;width:600px;text-align:center;">I</div>
<div class="r" style="left:951px;top:237px;width:1px;height:28px;background:#c0c0c0;"></div>
<div class="t" style="top:243.55px;font-size:17px;color:#222;left:695.0px;width:600px;text-align:center;">J</div>
<div class="r" style="left:1039px;top:237px;width:1px;height:28px;background:#c0c0c0;"></div>
<div class="t" style="top:243.55px;font-size:17px;color:#217346;left:783.0px;width:600px;text-align:center;">K</div>
<div class="r" style="left:1127px;top:237px;width:1px;height:28px;background:#c0c0c0;"></div>
<div class="t" style="top:243.55px;font-size:17px;color:#222;left:871.0px;width:600px;text-align:center;">L</div>
<div class="r" style="left:1215px;top:237px;width:1px;height:28px;background:#c0c0c0;"></div>
<div class="t" style="top:243.55px;font-size:17px;color:#222;left:959.0px;width:600px;text-align:center;">M</div>
<div class="r" style="left:1303px;top:237px;width:1px;height:28px;background:#c0c0c0;"></div>
<div class="t" style="top:243.55px;font-size:17px;color:#222;left:1047.0px;width:600px;text-align:center;">N</div>
<div class="r" style="left:1391px;top:237px;width:1px;height:28px;background:#c0c0c0;"></div>
<div class="t" style="top:243.55px;font-size:17px;color:#222;left:1135.0px;width:600px;text-align:center;">O</div>
<div class="r" style="left:1479px;top:237px;width:1px;height:28px;background:#c0c0c0;"></div>
<div class="t" style="top:243.55px;font-size:17px;color:#222;left:1223.0px;width:600px;text-align:center;">P</div>
<div class="r" style="left:1567px;top:237px;width:1px;height:28px;background:#c0c0c0;"></div>
<div class="t" style="top:243.55px;font-size:17px;color:#222;left:1311.0px;width:600px;text-align:center;">Q</div>
<div class="r" style="left:1655px;top:237px;width:1px;height:28px;background:#c0c0c0;"></div>
<div class="t" style="top:243.55px;font-size:17px;color:#222;left:1399.0px;width:600px;text-align:center;">R</div>
<div class="r" style="left:1743px;top:237px;width:1px;height:28px;background:#c0c0c0;"></div>
<div class="t" style="top:243.55px;font-size:17px;color:#222;left:1487.0px;width:600px;text-align:center;">S</div>
<div class="r" style="left:1831px;top:237px;width:1px;height:28px;background:#c0c0c0;"></div>
<div class="t" style="top:243.55px;font-size:17px;color:#222;left:1575.0px;width:600px;text-align:center;">T</div>
<div class="r" style="left:0px;top:291px;width:37px;height:1px;background:#c4c4c4;"></div>
<div class="t" style="top:269.55px;font-size:17px;color:#222;left:-281px;width:600px;text-align:center;">1</div>
<div class="r" style="left:0px;top:334px;width:37px;height:1px;background:#c4c4c4;"></div>
<div class="t" style="top:312.05px;font-size:17px;color:#222;left:-281px;width:600px;text-align:center;">2</div>
<div class="r" style="left:0px;top:360px;width:37px;height:1px;background:#c4c4c4;"></div>
<div class="t" style="top:338.55px;font-size:17px;color:#222;left:-281px;width:600px;text-align:center;">3</div>
<div class="r" style="left:0px;top:386px;width:37px;height:1px;background:#c4c4c4;"></div>
<div class="t" style="top:364.55px;font-size:17px;color:#222;left:-281px;width:600px;text-align:center;">4</div>
<div class="r" style="left:0px;top:412px;width:37px;height:1px;background:#c4c4c4;"></div>
<div class="t" style="top:390.55px;font-size:17px;color:#222;left:-281px;width:600px;text-align:center;">5</div>
<div class="r" style="left:0px;top:438px;width:37px;height:1px;background:#c4c4c4;"></div>
<div class="t" style="top:416.55px;font-size:17px;color:#222;left:-281px;width:600px;text-align:center;">6</div>
<div class="r" style="left:0px;top:464px;width:37px;height:1px;background:#c4c4c4;"></div>
<div class="t" style="top:442.55px;font-size:17px;color:#222;left:-281px;width:600px;text-align:center;">7</div>
<div class="r" style="left:0px;top:490px;width:37px;height:1px;background:#c4c4c4;"></div>
<div class="t" style="top:468.55px;font-size:17px;color:#222;left:-281px;width:600px;text-align:center;">8</div>
<div class="r" style="left:0px;top:516px;width:37px;height:1px;background:#c4c4c4;"></div>
<div class="t" style="top:494.55px;font-size:17px;color:#222;left:-281px;width:600px;text-align:center;">9</div>
<div class="r" style="left:0px;top:542px;width:37px;height:1px;background:#c4c4c4;"></div>
<div class="t" style="top:520.55px;font-size:17px;color:#222;left:-281px;width:600px;text-align:center;">10</div>
<div class="r" style="left:0px;top:568px;width:37px;height:1px;background:#c4c4c4;"></div>
<div class="t" style="top:546.55px;font-size:17px;color:#222;left:-281px;width:600px;text-align:center;">11</div>
<div class="r" style="left:0px;top:594px;width:37px;height:1px;background:#c4c4c4;"></div>
<div class="t" style="top:572.55px;font-size:17px;color:#222;left:-281px;width:600px;text-align:center;">12</div>
<div class="r" style="left:0px;top:620px;width:37px;height:1px;background:#c4c4c4;"></div>
<div class="t" style="top:598.55px;font-size:17px;color:#222;left:-281px;width:600px;text-align:center;">13</div>
<div class="r" style="left:0px;top:646px;width:37px;height:1px;background:#c4c4c4;"></div>
<div class="t" style="top:624.55px;font-size:17px;color:#222;left:-281px;width:600px;text-align:center;">14</div>
<div class="r" style="left:0px;top:672px;width:37px;height:1px;background:#c4c4c4;"></div>
<div class="t" style="top:650.55px;font-size:17px;color:#217346;left:-281px;width:600px;text-align:center;">15</div>
<div class="r" style="left:0px;top:715px;width:37px;height:1px;background:#c4c4c4;"></div>
<div class="t" style="top:693.05px;font-size:17px;color:#222;left:-281px;width:600px;text-align:center;">16</div>
<div class="r" style="left:0px;top:758px;width:37px;height:1px;background:#c4c4c4;"></div>
<div class="t" style="top:736.05px;font-size:17px;color:#222;left:-281px;width:600px;text-align:center;">17</div>
<div class="r" style="left:0px;top:801px;width:37px;height:1px;background:#c4c4c4;"></div>
<div class="t" style="top:779.05px;font-size:17px;color:#222;left:-281px;width:600px;text-align:center;">18</div>
<div class="r" style="left:0px;top:844px;width:37px;height:1px;background:#c4c4c4;"></div>
<div class="t" style="top:822.05px;font-size:17px;color:#222;left:-281px;width:600px;text-align:center;">19</div>
<div class="r" style="left:0px;top:887px;width:37px;height:1px;background:#c4c4c4;"></div>
<div class="t" style="top:865.05px;font-size:17px;color:#222;left:-281px;width:600px;text-align:center;">20</div>
<div class="r" style="left:0px;top:930px;width:37px;height:1px;background:#c4c4c4;"></div>
<div class="t" style="top:908.05px;font-size:17px;color:#222;left:-281px;width:600px;text-align:center;">21</div>
<div class="t" style="top:951.05px;font-size:17px;color:#222;left:-281px;width:600px;text-align:center;">22</div>
<div class="r" style="left:63px;top:266px;width:1px;height:698px;background:#d4d4d4;"></div>
<div class="r" style="left:89px;top:266px;width:1px;height:698px;background:#d4d4d4;"></div>
<div class="r" style="left:235px;top:266px;width:1px;height:698px;background:#d4d4d4;"></div>
<div class="r" style="left:461px;top:266px;width:1px;height:698px;background:#d4d4d4;"></div>
<div class="r" style="left:607px;top:266px;width:1px;height:698px;background:#d4d4d4;"></div>
<div class="r" style="left:753px;top:266px;width:1px;height:698px;background:#d4d4d4;"></div>
<div class="r" style="left:898px;top:266px;width:1px;height:698px;background:#d4d4d4;"></div>
<div class="r" style="left:925px;top:266px;width:1px;height:698px;background:#d4d4d4;"></div>
<div class="r" style="left:951px;top:266px;width:1px;height:698px;background:#d4d4d4;"></div>
<div class="r" style="left:1039px;top:266px;width:1px;height:698px;background:#d4d4d4;"></div>
<div class="r" style="left:1127px;top:266px;width:1px;height:698px;background:#d4d4d4;"></div>
<div class="r" style="left:1215px;top:266px;width:1px;height:698px;background:#d4d4d4;"></div>
<div class="r" style="left:1303px;top:266px;width:1px;height:698px;background:#d4d4d4;"></div>
<div class="r" style="left:1391px;top:266px;width:1px;height:698px;background:#d4d4d4;"></div>
<div class="r" style="left:1479px;top:266px;width:1px;height:698px;background:#d4d4d4;"></div>
<div class="r" style="left:1567px;top:266px;width:1px;height:698px;background:#d4d4d4;"></div>
<div class="r" style="left:1655px;top:266px;width:1px;height:698px;background:#d4d4d4;"></div>
<div class="r" style="left:1743px;top:266px;width:1px;height:698px;background:#d4d4d4;"></div>
<div class="r" style="left:1831px;top:266px;width:1px;height:698px;background:#d4d4d4;"></div>
<div class="r" style="left:38px;top:291px;width:1856px;height:1px;background:#d4d4d4;"></div>
<div class="r" style="left:38px;top:334px;width:1856px;height:1px;background:#d4d4d4;"></div>
<div class="r" style="left:38px;top:360px;width:1856px;height:1px;background:#d4d4d4;"></div>
<div class="r" style="left:38px;top:386px;width:1856px;height:1px;background:#d4d4d4;"></div>
<div class="r" style="left:38px;top:412px;width:1856px;height:1px;background:#d4d4d4;"></div>
<div class="r" style="left:38px;top:438px;width:1856px;height:1px;background:#d4d4d4;"></div>
<div class="r" style="left:38px;top:464px;width:1856px;height:1px;background:#d4d4d4;"></div>
<div class="r" style="left:38px;top:490px;width:1856px;height:1px;background:#d4d4d4;"></div>
<div class="r" style="left:38px;top:516px;width:1856px;height:1px;background:#d4d4d4;"></div>
<div class="r" style="left:38px;top:542px;width:1856px;height:1px;background:#d4d4d4;"></div>
<div class="r" style="left:38px;top:568px;width:1856px;height:1px;background:#d4d4d4;"></div>
<div class="r" style="left:38px;top:594px;width:1856px;height:1px;background:#d4d4d4;"></div>
<div class="r" style="left:38px;top:620px;width:1856px;height:1px;background:#d4d4d4;"></div>
<div class="r" style="left:38px;top:646px;width:1856px;height:1px;background:#d4d4d4;"></div>
<div class="r" style="left:38px;top:672px;width:1856px;height:1px;background:#d4d4d4;"></div>
<div class="r" style="left:38px;top:715px;width:1856px;height:1px;background:#d4d4d4;"></div>
<div class="r" style="left:38px;top:758px;width:1856px;height:1px;background:#d4d4d4;"></div>
<div class="r" style="left:38px;top:801px;width:1856px;height:1px;background:#d4d4d4;"></div>
<div class="r" style="left:38px;top:844px;width:1856px;height:1px;background:#d4d4d4;"></div>
<div class="r" style="left:38px;top:887px;width:1856px;height:1px;background:#d4d4d4;"></div>
<div class="r" style="left:38px;top:930px;width:1856px;height:1px;background:#d4d4d4;"></div>
<div class="r" style="left:63px;top:266px;width:863px;height:698px;background:#fff;"></div>
<div class="r" style="left:63px;top:266px;width:863px;height:198px;background:#175e80;"></div>
<div class="t" style="left:116.2px;top:323.6px;font-size:83px;font-weight:700;color:#fff;transform:scaleX(0.885);transform-origin:0 0">I</div>
<div class="t" style="left:140.8px;top:323.6px;font-size:83px;font-weight:700;color:#fff;transform:scaleX(1.024);transform-origin:0 0">N</div>
<div class="t" style="left:202.4px;top:323.6px;font-size:83px;font-weight:700;color:#fff;transform:scaleX(1.0);transform-origin:0 0">V</div>
<div class="t" style="left:256.8px;top:323.6px;font-size:83px;font-weight:700;color:#fff;transform:scaleX(0.97);transform-origin:0 0">O</div>
<div class="t" style="left:321.2px;top:323.6px;font-size:83px;font-weight:700;color:#fff;transform:scaleX(0.885);transform-origin:0 0">I</div>
<div class="t" style="left:344.4px;top:323.6px;font-size:83px;font-weight:700;color:#fff;transform:scaleX(0.837);transform-origin:0 0">C</div>
<div class="t" style="left:398.2px;top:323.6px;font-size:83px;font-weight:700;color:#fff;transform:scaleX(0.72);transform-origin:0 0">E</div>
<div class="t" style="top:304.70px;font-size:18px;color:#fff;font-weight:700;letter-spacing:0.2px;right:1040.8px;">Your Company Name</div>
<div class="t" style="top:339.20px;font-size:18px;color:#fff;letter-spacing:0.02px;right:1040.98px;">Street Address</div>
<div class="t" style="top:365.20px;font-size:18px;color:#fff;letter-spacing:0.02px;right:1040.98px;">City, State, Zip/Postal Code</div>
<div class="t" style="top:391.20px;font-size:18px;color:#fff;letter-spacing:0.02px;right:1040.98px;">Phone</div>
<div class="t" style="top:417.20px;font-size:18px;color:#fff;letter-spacing:0.02px;right:1040.98px;">Email</div>
<div class="t" style="top:520.70px;font-size:18px;color:#000;font-weight:700;letter-spacing:0.2px;left:111px;">Invoice No.</div>
<div class="t" style="top:546.70px;font-size:18px;color:#000;font-weight:700;letter-spacing:0.2px;left:111px;">Date of Issue</div>
<div class="t" style="top:572.70px;font-size:18px;color:#000;font-weight:700;letter-spacing:0.2px;left:111px;">Due Date</div>
<div class="t" style="top:546.70px;font-size:18px;color:#000;letter-spacing:0.02px;left:239px;">Enter Date Here</div>
<div class="t" style="top:572.70px;font-size:18px;color:#000;letter-spacing:0.02px;left:239px;">Enter Due Date Here</div>
<div class="t" style="top:494.70px;font-size:18px;color:#000;font-weight:700;letter-spacing:0.2px;right:1040.8px;">Bill To</div>
<div class="t" style="top:520.70px;font-size:18px;color:#000;letter-spacing:0.02px;right:1040.98px;">Client Company Name</div>
<div class="t" style="top:546.70px;font-size:18px;color:#000;letter-spacing:0.02px;right:1040.98px;">Address</div>
<div class="t" style="top:572.70px;font-size:18px;color:#000;letter-spacing:0.02px;right:1040.98px;">Phone</div>
<div class="t" style="top:598.70px;font-size:18px;color:#000;letter-spacing:0.02px;right:1040.98px;">Email</div>
<div class="r" style="left:235px;top:673px;width:1px;height:41px;background:#d4d4d4;"></div>
<div class="r" style="left:461px;top:673px;width:1px;height:41px;background:#d4d4d4;"></div>
<div class="r" style="left:607px;top:673px;width:1px;height:41px;background:#d4d4d4;"></div>
<div class="r" style="left:753px;top:673px;width:1px;height:41px;background:#d4d4d4;"></div>
<div class="r" style="left:235px;top:759px;width:1px;height:41px;background:#d4d4d4;"></div>
<div class="r" style="left:461px;top:759px;width:1px;height:41px;background:#d4d4d4;"></div>
<div class="r" style="left:607px;top:759px;width:1px;height:41px;background:#d4d4d4;"></div>
<div class="r" style="left:753px;top:759px;width:1px;height:41px;background:#d4d4d4;"></div>
<div class="r" style="left:235px;top:845px;width:1px;height:41px;background:#d4d4d4;"></div>
<div class="r" style="left:461px;top:845px;width:1px;height:41px;background:#d4d4d4;"></div>
<div class="r" style="left:607px;top:845px;width:1px;height:41px;background:#d4d4d4;"></div>
<div class="r" style="left:753px;top:845px;width:1px;height:41px;background:#d4d4d4;"></div>
<div class="r" style="left:235px;top:931px;width:1px;height:33px;background:#d4d4d4;"></div>
<div class="r" style="left:461px;top:931px;width:1px;height:33px;background:#d4d4d4;"></div>
<div class="r" style="left:607px;top:931px;width:1px;height:33px;background:#d4d4d4;"></div>
<div class="r" style="left:753px;top:931px;width:1px;height:33px;background:#d4d4d4;"></div>
<div class="r" style="left:89px;top:716px;width:810px;height:41px;background:#d9d9d9;"></div>
<div class="r" style="left:89px;top:802px;width:810px;height:41px;background:#d9d9d9;"></div>
<div class="r" style="left:89px;top:888px;width:810px;height:41px;background:#d9d9d9;"></div>
<div class="r" style="left:89px;top:671px;width:811px;height:2px;background:#000;"></div>
<div class="r" style="left:89px;top:714px;width:811px;height:2px;background:#0f2a3d;"></div>
<div class="r" style="left:89px;top:757px;width:811px;height:2px;background:#0f2a3d;"></div>
<div class="r" style="left:89px;top:800px;width:811px;height:2px;background:#0f2a3d;"></div>
<div class="r" style="left:89px;top:843px;width:811px;height:2px;background:#0f2a3d;"></div>
<div class="r" style="left:89px;top:886px;width:811px;height:2px;background:#0f2a3d;"></div>
<div class="r" style="left:89px;top:929px;width:811px;height:2px;background:#0f2a3d;"></div>
<div class="t" style="top:685.70px;font-size:18px;color:#000;font-weight:700;letter-spacing:0.2px;left:111px;">Item</div>
<div class="t" style="top:685.70px;font-size:18px;color:#000;font-weight:700;letter-spacing:0.2px;left:256.5px;">Description</div>
<div class="t" style="top:685.70px;font-size:18px;color:#000;font-weight:700;letter-spacing:0.2px;right:1332.8px;">Hours</div>
<div class="t" style="top:685.70px;font-size:18px;color:#000;font-weight:700;letter-spacing:0.2px;right:1186.8px;">Rate</div>
<div class="t" style="top:685.70px;font-size:18px;color:#000;font-weight:700;letter-spacing:0.2px;right:1040.8px;">Amount</div>
<div class="t" style="top:729.20px;font-size:18px;color:#000;letter-spacing:0.02px;left:111px;">1.00 &#8364;</div>
<div class="t" style="top:729.20px;font-size:18px;color:#000;letter-spacing:0.02px;left:256.5px;">Logo design</div>
<div class="t" style="top:729.20px;font-size:18px;color:#000;letter-spacing:0.02px;right:1332.98px;">3.00 &#8364;</div>
<div class="t" style="top:729.20px;font-size:18px;color:#000;letter-spacing:0.02px;right:1186.98px;">50.00 &#8364;</div>
<div class="t" style="top:729.20px;font-size:18px;color:#000;letter-spacing:0.02px;right:1040.98px;">150.00 &#8364;</div>
<div class="r" style="left:1038px;top:645px;width:91px;height:2px;background:#217346;"></div>
<div class="r" style="left:1038px;top:645px;width:2px;height:29px;background:#217346;"></div>
<div class="r" style="left:1038px;top:672px;width:86px;height:2px;background:#217346;"></div>
<div class="r" style="left:1127px;top:645px;width:2px;height:24px;background:#217346;"></div>
<div class="r" style="left:1125px;top:670px;width:5px;height:5px;background:#217346;"></div>
<div class="r" style="left:1894px;top:266px;width:1px;height:698px;background:#9e9e9e;"></div>
<div class="r" style="left:1895px;top:237px;width:24px;height:727px;background:#e6e6e6;"></div>
<div class="r" style="left:1898px;top:239px;width:19px;height:725px;background:#dadada;"></div>
<div class="r" style="left:1898px;top:239px;width:19px;height:19px;background:#fff;border:1px solid #c6c6c6;box-sizing:border-box;"></div>
<svg class="r" style="left:1903px;top:246px;" width="9" height="5" viewBox="0 0 9 5"><path d="M0 5H9L4.5 0Z" fill="#777"/></svg>
<div class="r" style="left:1898px;top:258px;width:19px;height:353px;background:#fff;border:1px solid #a8a8a8;box-sizing:border-box;"></div>
<div class="r" style="left:1898px;top:946px;width:19px;height:18px;background:#fff;border:1px solid #c6c6c6;box-sizing:border-box;"></div>
<svg class="r" style="left:1903px;top:953px;" width="9" height="5" viewBox="0 0 9 5"><path d="M0 0H9L4.5 5Z" fill="#777"/></svg>
<div class="r" style="left:0px;top:964px;width:1919px;height:29px;background:#e6e6e6;"></div>
<div class="r" style="left:0px;top:964px;width:1919px;height:1px;background:#9a9a9a;"></div>
<svg class="r" style="left:27px;top:974px;" width="6" height="9" viewBox="0 0 6 9"><path d="M6 0V9L0 4.5Z" fill="#c0c0c0"/></svg>
<svg class="r" style="left:57px;top:974px;" width="6" height="9" viewBox="0 0 6 9"><path d="M0 0V9L6 4.5Z" fill="#c0c0c0"/></svg>
<div class="r" style="left:103px;top:964px;width:167px;height:26px;background:#9a9a9a;"></div>
<div class="r" style="left:104px;top:964px;width:165px;height:25px;background:#fff;"></div>
<div class="r" style="left:106px;top:968px;width:161px;height:19px;background:linear-gradient(#ffffff,#a9c1d1)"></div>
<div class="r" style="left:103px;top:988px;width:167px;height:2px;background:#0e6b35;"></div>
<div class="t" style="top:966.56px;font-size:16.4px;color:#217346;font-weight:700;left:-113.5px;width:600px;text-align:center;">Timesheet invoice</div>
<svg class="r" style="left:302px;top:968px;" width="22" height="22" viewBox="0 0 22 22"><circle cx="11" cy="11" r="9.8" fill="none" stroke="#6d6d6d" stroke-width="1.4"/><path d="M11 5.5V16.5M5.5 11H16.5" stroke="#6d6d6d" stroke-width="1.6"/></svg>
<div class="r" style="left:1149px;top:972px;width:3px;height:3px;background:#a8a8a8;"></div>
<div class="r" style="left:1149px;top:977px;width:3px;height:3px;background:#a8a8a8;"></div>
<div class="r" style="left:1149px;top:982px;width:3px;height:3px;background:#a8a8a8;"></div>
<div class="r" style="left:1167px;top:969px;width:19px;height:19px;background:#fff;border:1px solid #c6c6c6;box-sizing:border-box;"></div>
<svg class="r" style="left:1173px;top:974px;" width="5" height="9" viewBox="0 0 5 9"><path d="M5 0V9L0 4.5Z" fill="#6d6d6d"/></svg>
<div class="r" style="left:1186px;top:969px;width:690px;height:19px;background:#dadada;"></div>
<div class="r" style="left:1186px;top:969px;width:653px;height:19px;background:#fff;border:1px solid #a8a8a8;box-sizing:border-box;"></div>
<div class="r" style="left:1876px;top:969px;width:19px;height:19px;background:#fff;border:1px solid #c6c6c6;box-sizing:border-box;"></div>
<svg class="r" style="left:1883px;top:974px;" width="5" height="9" viewBox="0 0 5 9"><path d="M0 0V9L5 4.5Z" fill="#6d6d6d"/></svg>
<div class="r" style="left:0px;top:993px;width:1919px;height:27px;background:#f1f1f1;"></div>
<div class="r" style="left:0px;top:993px;width:1919px;height:1px;background:#c6c6c6;"></div>
<div class="t" style="top:999.95px;font-size:13px;color:#444;left:7px;">Ready</div>
<div class="r" style="left:1582px;top:994px;width:41px;height:26px;background:#d2d2d2;"></div>
<svg class="r" style="left:1595px;top:999px;" width="14" height="14" viewBox="0 0 14 14"><path d="M0.5 0.5H13.5V13.5H0.5ZM0.5 4.8H13.5M0.5 9.2H13.5M4.8 0.5V13.5M9.2 0.5V13.5" fill="none" stroke="#6d6d6d"/></svg>
<svg class="r" style="left:1635px;top:999px;" width="16" height="14" viewBox="0 0 16 14"><path d="M0.5 0.5H15.5V13.5H0.5Z" fill="none" stroke="#6d6d6d"/><path d="M3.5 3.5H12.5V10.5H3.5Z" fill="none" stroke="#6d6d6d"/><path d="M5 6H11M5 8H11" stroke="#6d6d6d"/></svg>
<svg class="r" style="left:1676px;top:999px;" width="16" height="14" viewBox="0 0 16 14"><path d="M0.5 13.5V0.5H15.5V13.5M5.5 0.5V8.5H10.5V0.5" fill="none" stroke="#6d6d6d"/></svg>
<div class="r" style="left:1709px;top:1005px;width:10px;height:2px;background:#555;"></div>
<div class="r" style="left:1723px;top:1006px;width:125px;height:1px;background:#a0a0a0;"></div>
<div class="r" style="left:1783px;top:1000px;width:4px;height:13px;background:#555;"></div>
<div class="r" style="left:1853px;top:1005px;width:11px;height:2px;background:#555;"></div>
<div class="r" style="left:1857.5px;top:1000px;width:2px;height:12px;background:#555;"></div>
<div class="t" style="top:1000.38px;font-size:12.5px;color:#444;right:7px;">100%</div>
</body></html>
